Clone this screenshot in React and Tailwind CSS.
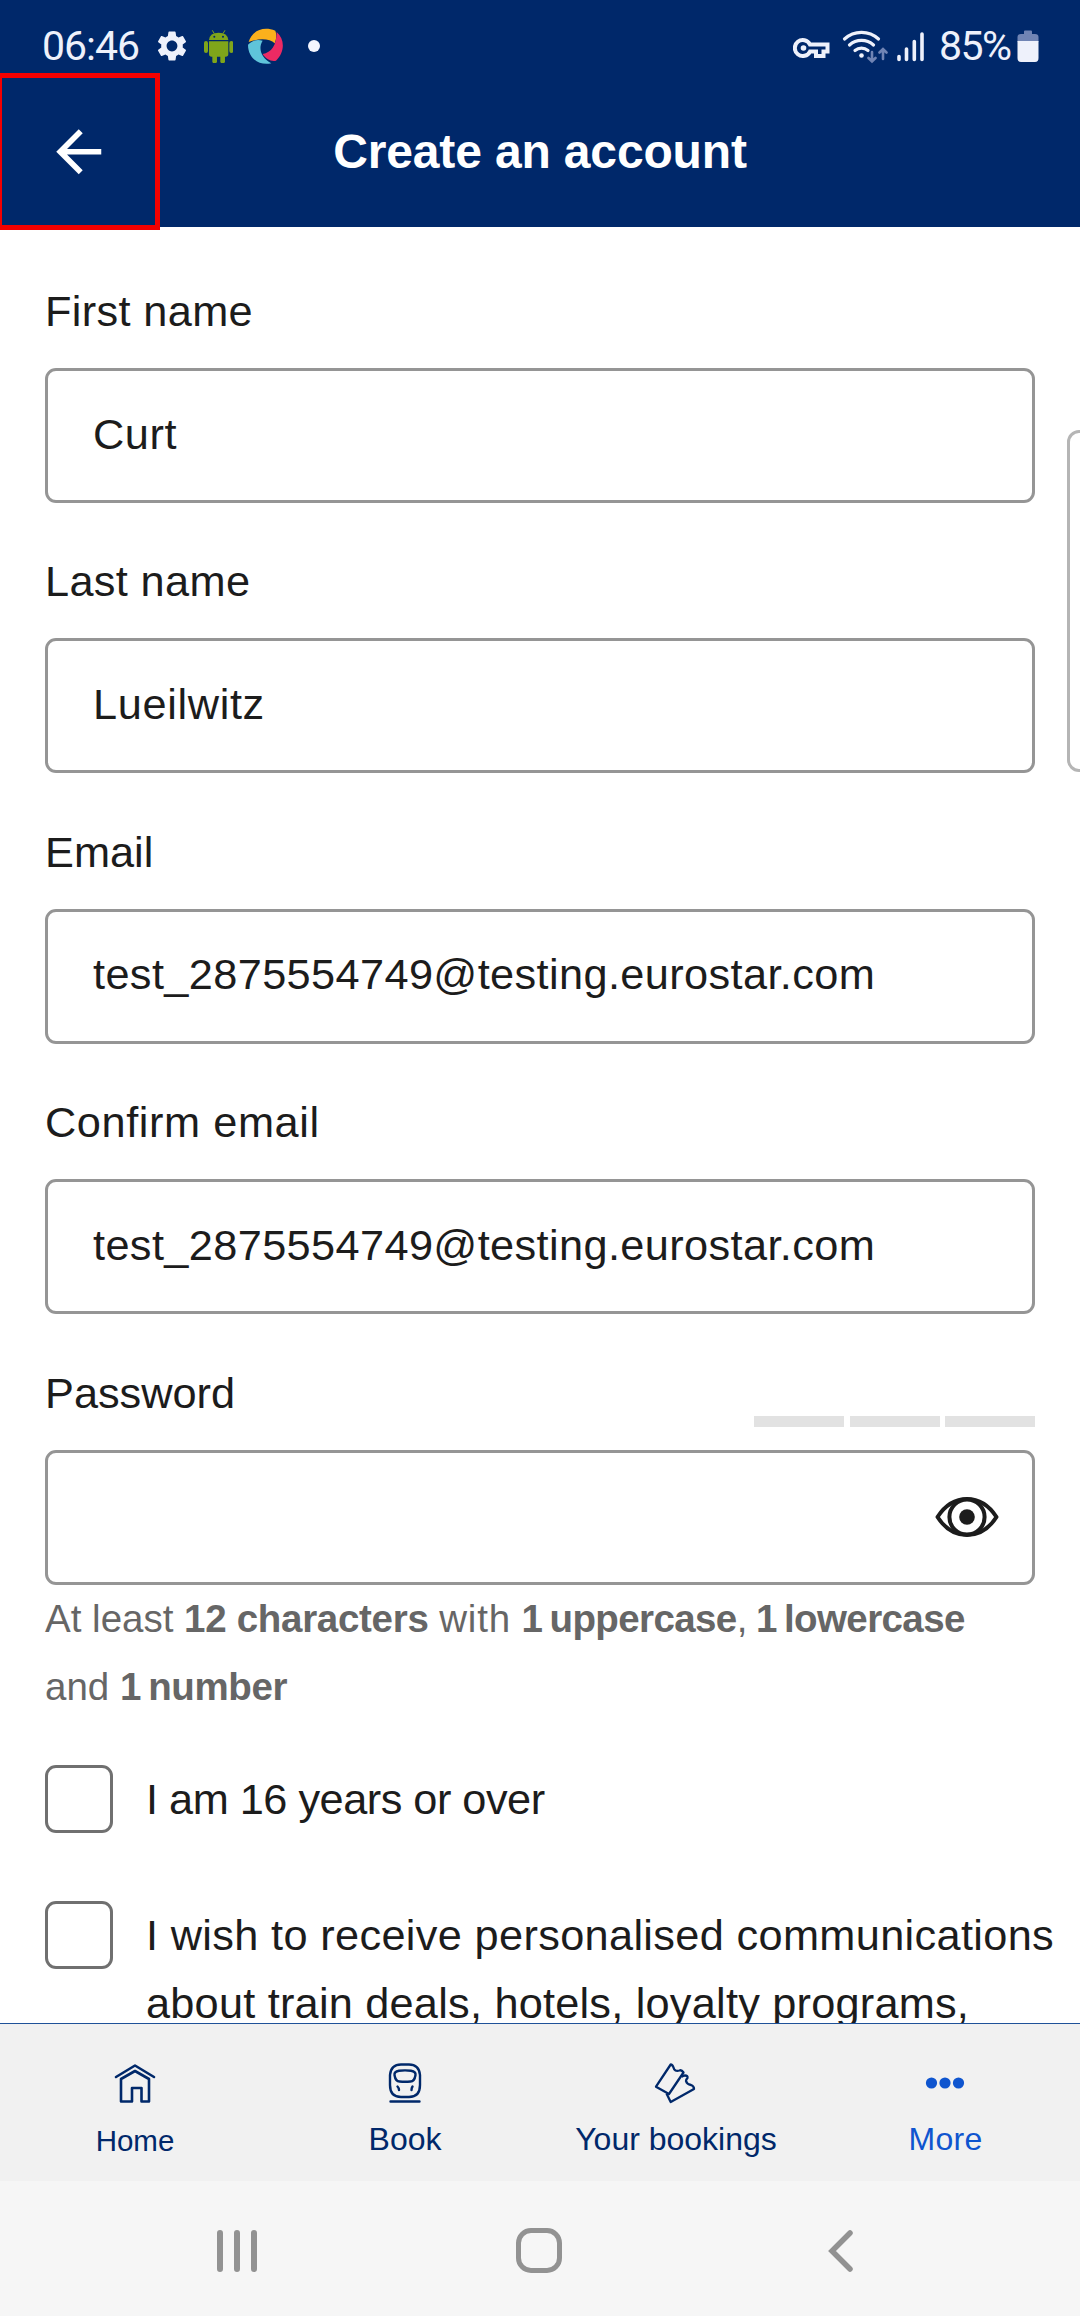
import { MdSettings, MdArrowBack } from "react-icons/md";

const SANS = "font-['Liberation_Sans',sans-serif]";

function Field({ label, children, meter, labelClass = "" }) {
  return (
    <div className="h-[270.4px] flex flex-col">
      <div className="h-[101px] shrink-0 flex justify-between items-start">
        <label className={"text-[43.3px] leading-[50px] mt-[19px] whitespace-nowrap " + labelClass}>{label}</label>
        {meter}
      </div>
      <div className="h-[135px] shrink-0 rounded-[11px] border-[3px] border-[#959595] bg-white flex items-center justify-between pl-[45px] pr-[33px]">
        {children}
      </div>
    </div>
  );
}

function Value({ children, className = "" }) {
  return <span className={"text-[43.3px] leading-[50px] whitespace-nowrap -mt-[4px] " + className}>{children}</span>;
}

function Check({ children, className = "" }) {
  return (
    <div className={"flex items-start gap-[33px] " + className}>
      <div className="size-[68px] shrink-0 rounded-[11px] border-[3px] border-[#707070]" />
      <div className="text-[43.3px] leading-[68px] whitespace-nowrap">{children}</div>
    </div>
  );
}

function StatusBar() {
  return (
    <div className="h-[72px] pt-[24px] pl-[42px] pr-[41px] flex items-start text-[#eef1fb] font-['Roboto',sans-serif] text-[41px] leading-[44px]">
      <span className="w-[112px] tracking-[-1px]">06:46</span>
      <MdSettings className="size-[36px] mt-[4px]" />
      <svg className="w-[29.3px] h-[33.3px] ml-[14px] mt-[6px]" viewBox="0 0 88 100" fill="#7fa51a">
        <path d="M15 30Q17 8 44 8Q71 8 73 30Z" />
        <path d="M25 1L31 11M63 1L57 11" stroke="#7fa51a" strokeWidth="3" />
        <path d="M15 34H73V72Q73 80 65 80H23Q15 80 15 72Z" />
        <rect x="0" y="33" width="12" height="36" rx="6" />
        <rect x="76" y="33" width="12" height="36" rx="6" />
        <rect x="25" y="66" width="14" height="34" rx="6" />
        <rect x="49" y="66" width="14" height="34" rx="6" />
        <circle cx="31" cy="20" r="3" fill="#00286a" />
        <circle cx="57" cy="20" r="3" fill="#00286a" />
      </svg>
      <svg className="w-[35px] h-[36px] ml-[14.4px] mt-[4px]" viewBox="0 0 105 108">
        <path d="M2 42C10 12 42-8 82 8C86 18 86 32 80 46C66 32 34 30 2 42Z" fill="#fbb01c" />
        <path d="M86 12C112 34 110 74 84 98C70 102 52 92 44 78C70 74 86 52 86 12Z" fill="#ec2a63" />
        <path d="M0 50C14 36 28 34 44 38C30 60 38 88 70 106C32 114 0 90 0 50Z" fill="#5fc4da" />
      </svg>
      <span className="size-[12px] rounded-full bg-[#f4f6ff] ml-[25.3px] mt-[16px]" />
      <div className="flex-1" />
      <svg className="w-[38px] h-[22px] mt-[13px]" viewBox="0 0 38 22" fill="none" stroke="currentColor" strokeWidth="4">
        <path d="M17 7.500A8 8 0 1 0 17 14.500H23V19H30.500V14.500H34.500V7.500Z" />
        <circle cx="10.500" cy="11" r="2.800" fill="currentColor" stroke="none" />
      </svg>
      <svg className="w-[46px] h-[34px] ml-[11px] mt-[6px]" viewBox="0 0 46 34" fill="none" stroke="currentColor" strokeWidth="3.200" strokeLinecap="round">
        <path d="M2.500 9A25 25 0 0 1 36.500 9M7.500 15A18 18 0 0 1 31.500 15M13 20.500A10 10 0 0 1 26 20.500" />
        <circle cx="19.500" cy="25.500" r="2.300" fill="currentColor" stroke="none" />
        <path d="M30 22V31M26.500 28L30 31.500L33.500 28M41 29V19.500M37.500 22.500L41 19L44.500 22.500" stroke="#7084b4" strokeWidth="2.600" />
      </svg>
      <svg className="w-[28px] h-[30px] ml-[9px] mt-[8px]" viewBox="0 0 28 30" stroke="currentColor" strokeWidth="3.600" strokeLinecap="round">
        <path d="M2 24.500V27.500M9.500 17V27.500M17.300 9.500V27.500M25 2V27.500" />
      </svg>
      <span className="ml-[14px] w-[78px] tracking-[-1.500px]">85%</span>
      <svg className="w-[22px] h-[32px] mt-[6px]" viewBox="0 0 22 32">
        <path d="M7 1.500Q7 0.500 8 0.500H14Q15 0.500 15 1.500V4H18Q21.500 4 21.500 7V12H0.500V7Q0.500 4 4 4H7Z" fill="#7084b4" />
        <path d="M0.500 11H21.500V28Q21.500 32 18 32H4Q0.500 32 0.500 28Z" fill="currentColor" />
      </svg>
    </div>
  );
}

function Tab({ icon, children, className = "" }) {
  return (
    <div className={"flex-1 flex flex-col items-center pt-[36px] gap-[13px] whitespace-nowrap leading-[36px] " + className}>
      {icon}
      <span>{children}</span>
    </div>
  );
}

export default function App() {
  return (
    <div className={"relative w-[1080px] h-[2316px] overflow-hidden bg-white text-[#1c1c1c] flex flex-col " + SANS}>
      <header className="h-[227px] shrink-0 bg-[#00286a] text-white">
        <StatusBar />
        <div className="h-[155px] flex items-center">
          <div className="h-[157px] w-[163px] -ml-[3px] mt-[3px] border-[5px] border-[#f40000] flex items-center justify-center shrink-0 z-10">
            <MdArrowBack className="size-[67.5px] mt-[1px]" />
          </div>
          <h1 className="flex-1 mr-[160px] mt-[4px] text-center font-bold text-[48px] leading-[56px] tracking-[-0.15px] whitespace-nowrap">Create an account</h1>
        </div>
      </header>

      <main className="h-[1796px] shrink-0 overflow-hidden px-[45px] pt-[40px]">
        <Field label="First name" labelClass="tracking-[0.35px]"><Value className="tracking-[0.6px]">Curt</Value></Field>
        <Field label="Last name" labelClass="tracking-[0.35px]"><Value className="tracking-[0.65px]">Lueilwitz</Value></Field>
        <Field label="Email"><Value className="tracking-[0.38px]">test_2875554749@testing.eurostar.com</Value></Field>
        <Field label="Confirm email" labelClass="tracking-[0.58px]"><Value className="tracking-[0.38px]">test_2875554749@testing.eurostar.com</Value></Field>
        <div className="h-[236.400px]">
          <Field
            label="Password"
            meter={
              <div className="flex gap-[5.5px] mt-[67px]">
                <div className="w-[90px] h-[11px] bg-[#e2e2e2]" />
                <div className="w-[90px] h-[11px] bg-[#e2e2e2]" />
                <div className="w-[90px] h-[11px] bg-[#e2e2e2]" />
              </div>
            }
          >
            <span />
            <svg className="w-[64px] h-[42px]" viewBox="0 0 64 42" fill="none" stroke="#1c1c1c" strokeWidth="4">
              <path d="M2.500 21C9 11 19 3 32 3S55 11 61.500 21C55 31 45 39 32 39S9 31 2.500 21Z" strokeLinejoin="round" />
              <circle cx="32" cy="21" r="17.600" />
              <circle cx="32" cy="21" r="7.800" fill="#1c1c1c" stroke="none" />
            </svg>
          </Field>
        </div>
        <p className="text-[38.500px] leading-[68px] text-[#666] whitespace-nowrap">
          At least <b className="tracking-[-0.3px]">12 characters</b> <span className="tracking-[0.8px]">with</span> <b className="[word-spacing:-3px] tracking-[-0.6px]">1 uppercase</b><span className="[word-spacing:-2px]">, </span><b className="[word-spacing:-3px] tracking-[-0.6px]">1 lowercase</b>
          <br />and <b className="[word-spacing:-3px] tracking-[-0.4px]">1 number</b>
        </p>
        <Check className="mt-[44px]"><span className="tracking-[-0.500px]">I am 16 years or over</span></Check>
        <Check className="mt-[68px]">
          <span className="tracking-[0.34px]">I wish to receive personalised communications</span>
          <br /><span className="tracking-[0.22px]">about train deals, hotels, loyalty programs,</span>
        </Check>
      </main>

      <nav className="h-[158px] shrink-0 border-t border-[#1f5299] bg-[#f1f1f1] flex text-[32px] text-[#00286a]">
        <Tab
          className="text-[29.5px]"
          icon={
            <svg className="w-[44px] h-[48px] mb-[2px]" viewBox="0 0 44 48" fill="none" stroke="currentColor" strokeWidth="2.600" strokeLinejoin="round" strokeLinecap="round">
              <path d="M3 17L22 5.500L41 17M8 19L22 11L36 19V41.500H28.500V28H19V41.500H8Z" />
            </svg>
          }
        >Home</Tab>
        <Tab
          icon={
            <svg className="w-[44px] h-[48px]" viewBox="0 0 44 48" fill="none" stroke="currentColor" strokeWidth="2.400" strokeLinecap="round">
              <path d="M18 4.500H26Q36 4.500 37 15V25Q37 37 26 37H18Q7 37 7 25V15Q8 4.500 18 4.500Z" />
              <path d="M16 10.700Q22 10 28 10.700Q33 11.500 32.500 15Q31.500 21.500 27.500 21.500Q22 22 16.500 21.500Q12.500 21.500 11.500 15Q11 11.500 16 10.700Z" />
              <path d="M14.500 26.500Q16 28 16 30M29.500 26.500Q28.500 28 28.500 30M7.500 41.500H36.500" />
            </svg>
          }
        >Book</Tab>
        <Tab
          icon={
            <svg className="w-[44px] h-[48px]" viewBox="0 0 44 48" fill="none" stroke="currentColor" strokeWidth="2.300" strokeLinejoin="round">
              <path d="M17.700 4.500L3 26.700L16 34L30.500 12.500Q28.500 9.500 26.500 10.500Q21.500 12 20.500 7.500Q19.500 4.500 17.700 4.500Z" />
              <path d="M13.500 33.500L17.700 42L41 29Q41 26 38 25Q34 24.500 33 21Q33 19.500 34.500 18Q35 15.500 32 15.500Q30 15.500 28.500 17" />
            </svg>
          }
        ><span className="ml-[2px]">Your bookings</span></Tab>
        <Tab
          className="text-[#0f55cf]"
          icon={
            <svg className="w-[44px] h-[48px]" viewBox="0 0 44 48" fill="currentColor">
              <circle cx="8.500" cy="23" r="5.600" /><circle cx="22" cy="23" r="5.600" /><circle cx="35.500" cy="23" r="5.600" />
            </svg>
          }
        ><span className="ml-[1px] tracking-[0.3px]">More</span></Tab>
      </nav>

      <footer className="flex-1 bg-[#f6f6f6] flex items-center justify-between pl-[216px] pr-[226px] pt-[4px]">
        <svg className="w-[42px] h-[44px]" viewBox="0 0 42 44" stroke="#929292" strokeWidth="6" strokeLinecap="round">
          <path d="M4 4V40M21 4V40M38 4V40" />
        </svg>
        <div className="w-[46px] h-[45px] rounded-[15px] border-[5px] border-[#929292] -ml-[6px]" />
        <svg className="w-[28px] h-[46px]" viewBox="0 0 28 46" fill="none" stroke="#929292" strokeWidth="5.500" strokeLinecap="round">
          <path d="M24 5L6 23L24 41" />
        </svg>
      </footer>

      <div className="absolute left-[1067px] top-[430px] w-[24px] h-[342px] rounded-[12px] border-[3px] border-[#b5b5b5] bg-white" />
    </div>
  );
}
